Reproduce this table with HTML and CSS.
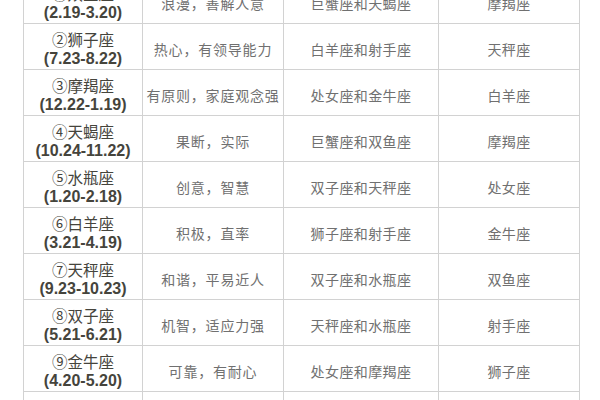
FILE: index.html
```html
<!DOCTYPE html>
<html lang="zh">
<head>
<meta charset="utf-8">
<title>星座</title>
<link rel="stylesheet" href="styles.css">
</head>
<body>
<table class="zodiac">
  <colgroup>
    <col class="c1"><col class="c2"><col class="c3"><col class="c4">
  </colgroup>
  <tbody>
    <tr><td class="sign"><span class="name">①双鱼座</span><span class="date">(2.19-3.20)</span></td><td class="trait">浪漫，善解人意</td><td class="match">巨蟹座和天蝎座</td><td class="other">摩羯座</td></tr>
    <tr><td class="sign"><span class="name">②狮子座</span><span class="date">(7.23-8.22)</span></td><td class="trait">热心，有领导能力</td><td class="match">白羊座和射手座</td><td class="other">天秤座</td></tr>
    <tr><td class="sign"><span class="name">③摩羯座</span><span class="date">(12.22-1.19)</span></td><td class="trait">有原则，家庭观念强</td><td class="match">处女座和金牛座</td><td class="other">白羊座</td></tr>
    <tr><td class="sign"><span class="name">④天蝎座</span><span class="date">(10.24-11.22)</span></td><td class="trait">果断，实际</td><td class="match">巨蟹座和双鱼座</td><td class="other">摩羯座</td></tr>
    <tr><td class="sign"><span class="name">⑤水瓶座</span><span class="date">(1.20-2.18)</span></td><td class="trait">创意，智慧</td><td class="match">双子座和天秤座</td><td class="other">处女座</td></tr>
    <tr><td class="sign"><span class="name">⑥白羊座</span><span class="date">(3.21-4.19)</span></td><td class="trait">积极，直率</td><td class="match">狮子座和射手座</td><td class="other">金牛座</td></tr>
    <tr><td class="sign"><span class="name">⑦天秤座</span><span class="date">(9.23-10.23)</span></td><td class="trait">和谐，平易近人</td><td class="match">双子座和水瓶座</td><td class="other">双鱼座</td></tr>
    <tr><td class="sign"><span class="name">⑧双子座</span><span class="date">(5.21-6.21)</span></td><td class="trait">机智，适应力强</td><td class="match">天秤座和水瓶座</td><td class="other">射手座</td></tr>
    <tr><td class="sign"><span class="name">⑨金牛座</span><span class="date">(4.20-5.20)</span></td><td class="trait">可靠，有耐心</td><td class="match">处女座和摩羯座</td><td class="other">狮子座</td></tr>
    <tr><td class="sign"><span class="name">⑩巨蟹座</span><span class="date">(6.22-7.22)</span></td><td class="trait">敏感，顾家</td><td class="match">天蝎座和双鱼座</td><td class="other">水瓶座</td></tr>
  </tbody>
</table>
</body>
</html>
```
FILE: styles.css
```css
html, body {
  margin: 0;
  padding: 0;
  background: #ffffff;
  overflow: hidden;
}

.zodiac {
  border-collapse: collapse;
  table-layout: fixed;
  width: 556px;
  margin: -23px 0 0 23px;
  font-family: "Noto Sans CJK SC", "Liberation Sans", sans-serif;
}

.c1 { width: 119px; }
.c2 { width: 141px; }
.c3 { width: 155px; }
.c4 { width: 141px; }

.zodiac td {
  border: 1px solid #d2d2d2;
  height: 46px;
  padding: 4px 0 0 0;
  box-sizing: border-box;
  text-align: center;
  vertical-align: middle;
  color: #707070;
  font-size: 14px;
  line-height: 18px;
  white-space: nowrap;
  overflow: hidden;
}

.zodiac td.trait { letter-spacing: 0.8px; }
.zodiac td.match,
.zodiac td.other { letter-spacing: 0.4px; }

.sign .name,
.sign .date {
  display: block;
  color: #45443c;
}

.sign .name {
  font-family: "Noto Sans CJK SC", "Liberation Sans", sans-serif;
  font-size: 15.5px;
  font-weight: 400;
  line-height: 19px;
}

.sign .date {
  font-family: "Liberation Sans", "Noto Sans CJK SC", sans-serif;
  font-size: 16px;
  font-weight: 700;
  line-height: 19px;
}
```
